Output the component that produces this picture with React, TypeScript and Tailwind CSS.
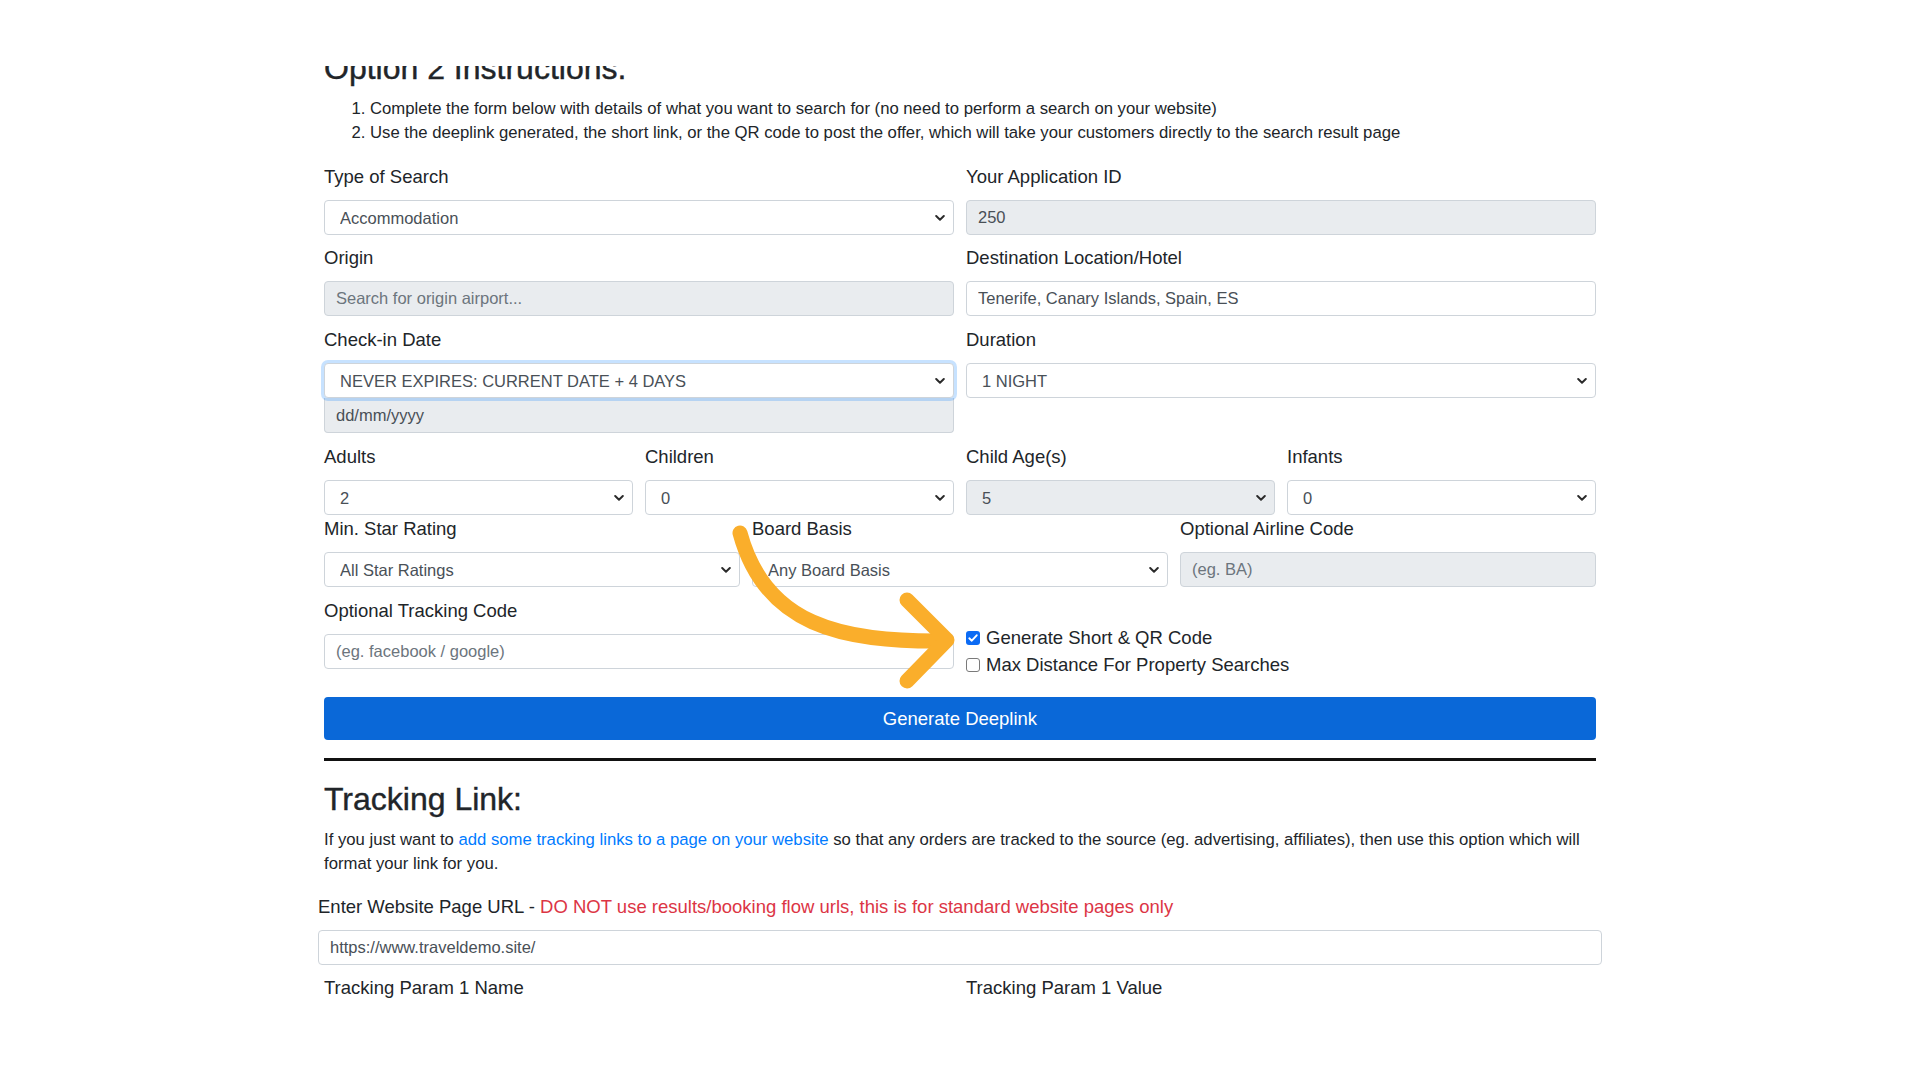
import type { ReactNode } from "react";

const controlBase =
  "block h-[35px] w-full rounded-[4px] border border-[#ced4da] text-[16.5px] text-[#495057] outline-none placeholder:text-[#6c757d]";

function Label({ children }: { children: ReactNode }) {
  return <label className="mb-[10px] block text-[18.5px] leading-[27px]">{children}</label>;
}

function Chevron() {
  return (
    <svg
      className="pointer-events-none absolute right-[9px] top-1/2 -translate-y-1/2"
      width="10"
      height="7"
      viewBox="0 0 10 7"
      fill="none"
    >
      <path d="M1.2 1.5 5 5.2 8.8 1.5" stroke="#2b2b2b" strokeWidth="2" strokeLinecap="round" strokeLinejoin="round" />
    </svg>
  );
}

function Select({
  value,
  disabled,
  focused,
}: {
  value: string;
  disabled?: boolean;
  focused?: boolean;
}) {
  return (
    <div className={focused ? "relative z-10" : "relative"}>
      <select
        defaultValue={value}
        className={
          controlBase +
          " appearance-none pl-[15px] pr-[28px] " +
          (disabled ? "bg-[#e9ecef]" : "bg-white") +
          (focused ? " border-[#80bdff] shadow-[0_0_0_3px_rgba(0,123,255,0.22)]" : "")
        }
      >
        <option>{value}</option>
      </select>
      <Chevron />
    </div>
  );
}

function Input({
  value,
  placeholder,
  disabled,
}: {
  value?: string;
  placeholder?: string;
  disabled?: boolean;
}) {
  return (
    <input
      readOnly
      defaultValue={value}
      placeholder={placeholder}
      className={controlBase + " px-[11px] " + (disabled ? "bg-[#e9ecef]" : "bg-white")}
    />
  );
}

function Field({ label, children, className }: { label: string; children: ReactNode; className?: string }) {
  return (
    <div className={className}>
      <Label>{label}</Label>
      {children}
    </div>
  );
}

function Check({ checked, label }: { checked?: boolean; label: string }) {
  return (
    <div className="flex items-center gap-[6px] text-[18.5px] leading-[27px]">
      {checked ? (
        <span className="flex h-[14px] w-[14px] items-center justify-center rounded-[3px] bg-[#0b6bf4]">
          <svg width="10" height="8" viewBox="0 0 10 8" fill="none">
            <path d="M1.3 4.3 3.8 6.7 8.7 1.3" stroke="#fff" strokeWidth="1.9" strokeLinecap="round" strokeLinejoin="round" />
          </svg>
        </span>
      ) : (
        <span className="h-[14px] w-[14px] rounded-[3px] border border-[#7a7a7a] bg-white" />
      )}
      <span>{label}</span>
    </div>
  );
}

function Arrow() {
  return (
    <svg
      className="pointer-events-none absolute left-0 top-0 z-20"
      width="1920"
      height="1080"
      viewBox="0 0 1920 1080"
      fill="none"
    >
      <path
        d="M740 533 C765 625 840 642 944 641"
        stroke="#faae2b"
        strokeWidth="15"
        strokeLinecap="round"
      />
      <path
        d="M907 600 L947 640 L907 681"
        stroke="#faae2b"
        strokeWidth="15"
        strokeLinecap="round"
        strokeLinejoin="round"
      />
    </svg>
  );
}

export default function App() {
  return (
    <div className="relative h-[1080px] w-full overflow-hidden bg-white font-['Liberation_Sans',Arial,sans-serif] text-[#212529]">
      <div className="pt-[66px]">
        <div className="mx-auto h-[937px] w-[1300px] overflow-hidden px-[14px]">
          <h2 className="mb-[10px] mt-[-17px] text-[32px] leading-[38.4px] [-webkit-text-stroke:0.4px_#212529]">
            Option 2 Instructions:
          </h2>
          <ol className="mb-[18px] list-decimal pl-[46px] text-[16.7px] leading-[24px]">
            <li>Complete the form below with details of what you want to search for (no need to perform a search on your website)</li>
            <li>
              Use the deeplink generated, the short link, or the QR code to post the offer, which will take your
              customers directly to the search result page
            </li>
          </ol>

          <div className="grid grid-cols-2 gap-x-[12px]">
            <Field label="Type of Search" className="mb-[9px]">
              <Select value="Accommodation" />
            </Field>
            <Field label="Your Application ID" className="mb-[9px]">
              <Input value="250" disabled />
            </Field>
            <Field label="Origin" className="mb-[10px]">
              <Input placeholder="Search for origin airport..." disabled />
            </Field>
            <Field label="Destination Location/Hotel" className="mb-[10px]">
              <Input value="Tenerife, Canary Islands, Spain, ES" />
            </Field>
            <Field label="Check-in Date" className="mb-[10px]">
              <Select value="NEVER EXPIRES: CURRENT DATE + 4 DAYS" focused />
              <input
                readOnly
                defaultValue="dd/mm/yyyy"
                className="block h-[35px] w-full rounded-b-[4px] border border-t-0 border-[#ced4da] bg-[#e9ecef] px-[11px] text-[16.5px] text-[#495057] outline-none"
              />
            </Field>
            <Field label="Duration" className="mb-[10px]">
              <Select value="1 NIGHT" />
            </Field>
          </div>

          <div className="grid grid-cols-4 gap-x-[12px]">
            <Field label="Adults">
              <Select value="2" />
            </Field>
            <Field label="Children">
              <Select value="0" />
            </Field>
            <Field label="Child Age(s)">
              <Select value="5" disabled />
            </Field>
            <Field label="Infants">
              <Select value="0" />
            </Field>
          </div>

          <div className="grid grid-cols-3 gap-x-[12px]">
            <Field label="Min. Star Rating" className="mb-[10px]">
              <Select value="All Star Ratings" />
            </Field>
            <Field label="Board Basis" className="mb-[10px]">
              <Select value="Any Board Basis" />
            </Field>
            <Field label="Optional Airline Code" className="mb-[10px]">
              <Input placeholder="(eg. BA)" disabled />
            </Field>
          </div>

          <div className="grid grid-cols-2 gap-x-[12px]">
            <Field label="Optional Tracking Code">
              <Input placeholder="(eg. facebook / google)" />
            </Field>
            <div className="pt-[27px]">
              <Check checked label="Generate Short & QR Code" />
              <Check label="Max Distance For Property Searches" />
            </div>
          </div>

          <button
            type="button"
            className="mt-[19px] flex h-[43px] w-full items-center justify-center rounded-[4px] bg-[#0a68d8] text-[18.5px] text-white"
          >
            Generate Deeplink
          </button>

          <div className="mt-[18px] h-[3px] bg-[#111]" />

          <h2 className="mt-[19px] text-[32px] leading-[38px] [-webkit-text-stroke:0.4px_#212529]">Tracking Link:</h2>
          <p className="mt-[10px] text-[16.7px] leading-[24px]">
            If you just want to <span className="text-[#007bff]">add some tracking links to a page on your website</span> so
            that any orders are tracked to the source (eg. advertising, affiliates), then use this option which will
            <br />
            format your link for you.
          </p>

          <div className="mx-[-6px] mt-[17px]">
            <Label>
              Enter Website Page URL -{" "}
              <span className="text-[#dc3545]">DO NOT use results/booking flow urls, this is for standard website pages only</span>
            </Label>
            <Input value="https://www.traveldemo.site/" />
          </div>

          <div className="mt-[9px] grid grid-cols-2 gap-x-[12px]">
            <Field label="Tracking Param 1 Name">
              <Input />
            </Field>
            <Field label="Tracking Param 1 Value">
              <Input />
            </Field>
          </div>
        </div>
      </div>
      <Arrow />
    </div>
  );
}
